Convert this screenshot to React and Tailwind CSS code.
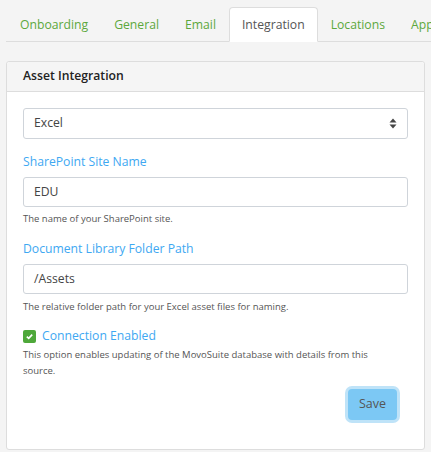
import React from "react";

const tabs = ["Onboarding", "General", "Email", "Integration", "Locations", "Applications"];

export default function App() {
  return (
    <div
      className="w-[431px] h-[452px] overflow-hidden bg-[#f4f4f4] text-[#333]"
      style={{ fontFamily: '"Open Sans", "Noto Sans", sans-serif' }}
    >
      <div className="pt-[7px] pl-[6px]">
        <div className="flex border-b border-[#dddddd] pl-[1px] whitespace-nowrap">
          {tabs.map((t) => (
            <div
              key={t}
              className={
                t === "Integration"
                  ? "-mb-px px-[12px] pt-[2px] h-[35px] flex items-center bg-white border border-[#dddddd] border-b-white rounded-t-[4px] text-[12.2px] text-[#555]"
                  : "-mb-px px-[12px] pt-[2px] h-[35px] flex items-center border border-transparent text-[12.2px] text-[#5ca83c]"
              }
            >
              {t}
            </div>
          ))}
        </div>
      </div>
      <div className="mx-[6px] mt-[19px] h-[389px] bg-white border border-[#dddddd] rounded-[3px]">
        <div className="h-[30px] bg-[#f5f5f5] border-b border-[#dddddd] flex items-center px-[16px] text-[12.2px] font-semibold text-[#222] rounded-t-[3px]">
          Asset Integration
        </div>
        <div className="px-[16px] pt-[16px]">
          <div className="h-[31px] border border-[#cfd4da] rounded-[3px] flex items-center justify-between pl-[10px] pr-[10px] text-[12.2px] text-[#444]">
            <span>Excel</span>
            <svg width="8" height="11" viewBox="0 0 8 11">
              <path d="M4 0.5 L7.5 4.5 H0.5 Z" fill="#444" />
              <path d="M4 10.5 L7.5 6.5 H0.5 Z" fill="#444" />
            </svg>
          </div>
          <div className="mt-[13px] text-[12.2px] text-[#3ea8f2] leading-[20px]">SharePoint Site Name</div>
          <div className="mt-[5px] h-[30px] border border-[#cfd4da] rounded-[3px] flex items-center pl-[10px] text-[12.2px] text-[#444]">
            EDU
          </div>
          <div className="mt-[4px] text-[9.5px] text-[#555] leading-[16px]">The name of your SharePoint site.</div>
          <div className="mt-[12px] text-[12.2px] text-[#3ea8f2] leading-[20px]">Document Library Folder Path</div>
          <div className="mt-[5px] h-[30px] border border-[#cfd4da] rounded-[3px] flex items-center pl-[10px] text-[12.2px] text-[#444]">
            /Assets
          </div>
          <div className="mt-[5px] text-[9.5px] text-[#555] leading-[16px]">
            The relative folder path for your Excel asset files for naming.
          </div>
          <div className="mt-[11px] flex items-center gap-[6px]">
            <div className="w-[13px] h-[13px] rounded-[2px] bg-[#4ea83a] flex items-center justify-center">
              <svg width="9" height="9" viewBox="0 0 9 9">
                <path d="M1.8 4.6 L3.7 6.4 L7.2 2.6" stroke="white" strokeWidth="1.6" fill="none" />
              </svg>
            </div>
            <span className="text-[12.2px] text-[#3ea8f2] leading-[20px]">Connection Enabled</span>
          </div>
          <div className="mt-[1px] text-[9.5px] text-[#555] leading-[16px] pr-[30px]">
            This option enables updating of the MovoSuite database with details from this source.
          </div>
          <div className="flex justify-end mt-[10px] pr-[11px]">
            <button className="h-[31px] w-[49px] bg-[#7cc8f4] rounded-[4px] text-[12.5px] text-[#555] ring-[3px] ring-[#bfe3f8]">
              Save
            </button>
          </div>
        </div>
      </div>
    </div>
  );
}
